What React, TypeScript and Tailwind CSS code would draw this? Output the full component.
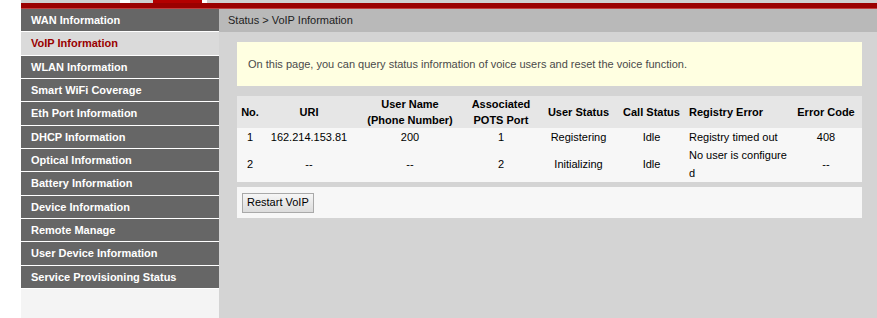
import React from 'react';

const menu = [
  'WAN Information',
  'VoIP Information',
  'WLAN Information',
  'Smart WiFi Coverage',
  'Eth Port Information',
  'DHCP Information',
  'Optical Information',
  'Battery Information',
  'Device Information',
  'Remote Manage',
  'User Device Information',
  'Service Provisioning Status',
];

const rows = [
  { no: '1', uri: '162.214.153.81', user: '200', port: '1', status: 'Registering', call: 'Idle', err: 'Registry timed out', code: '408' },
  { no: '2', uri: '--', user: '--', port: '2', status: 'Initializing', call: 'Idle', err: 'No user is configured', code: '--' },
];

const App: React.FC = () => {
  return (
    <div className="w-[877px] h-[318px] overflow-hidden bg-white flex flex-col text-[11px] font-['Liberation_Sans',Arial,sans-serif]">
      {/* header tabs remnant */}
      <div className="h-[3px] flex shrink-0">
        <div className="w-[21px] bg-white" />
        <div className="w-[99px] bg-[#cfcfcf]" />
        <div className="w-[10px] bg-white" />
        <div className="w-[23px] bg-[#cfcfcf]" />
        <div className="w-[49px] bg-[#b30000]" />
        <div className="w-[5px] bg-white" />
        <div className="flex-1 bg-[#cfcfcf]" />
      </div>
      <div className="h-[6px] flex shrink-0">
        <div className="w-[21px] bg-white" />
        <div className="flex-1 bg-[#9b0000] border-b border-[#c04040]" />
      </div>

      <div className="flex flex-1 min-h-0">
        <div className="w-[21px] bg-white" />
        {/* sidebar */}
        <div className="w-[198px] bg-[#f4f4f4] flex flex-col">
          {menu.map((m) => {
            const active = m === 'VoIP Information';
            return (
              <div
                key={m}
                className={
                  active
                    ? 'h-[23.33px] border-b border-white bg-[#dadada] text-[#990000] font-bold flex items-center pl-[10px]'
                    : 'h-[23.33px] border-b border-white bg-[#666666] text-white font-bold flex items-center pl-[10px]'
                }
              >
                {m}
              </div>
            );
          })}
        </div>

        {/* main */}
        <div className="flex-1 bg-[#d4d4d4] flex flex-col">
          <div className="h-[23px] bg-[#b9b9b9] flex items-center pl-[9px] text-[#222]">
            Status &gt; VoIP Information
          </div>
          <div className="pl-[18px] pr-[15px] pt-[10px] flex flex-col">
            <div className="h-[44px] bg-[#ffffe1] flex items-center pl-[11px] text-[#4a4a4a]">
              On this page, you can query status information of voice users and reset the voice function.
            </div>

            <table className="mt-[10px] w-[625px] table-fixed border-collapse text-black">
              <colgroup>
                <col className="w-[26px]" />
                <col className="w-[92px]" />
                <col className="w-[110px]" />
                <col className="w-[72px]" />
                <col className="w-[83px]" />
                <col className="w-[63px]" />
                <col className="w-[107px]" />
                <col className="w-[72px]" />
              </colgroup>
              <thead>
                <tr className="h-[32px] bg-[#e6e6e6] font-bold leading-[16px]">
                  <th className="text-center">No.</th>
                  <th className="text-center">URI</th>
                  <th className="text-center">User Name<br />(Phone Number)</th>
                  <th className="text-center">Associated<br />POTS Port</th>
                  <th className="text-center">User Status</th>
                  <th className="text-center">Call Status</th>
                  <th className="text-left pl-[6px]">Registry Error</th>
                  <th className="text-center">Error Code</th>
                </tr>
              </thead>
              <tbody>
                {rows.map((r) => (
                  <tr key={r.no} className="bg-[#f7f7f7] leading-[18px]">
                    <td className="text-center">{r.no}</td>
                    <td className="text-center">{r.uri}</td>
                    <td className="text-center">{r.user}</td>
                    <td className="text-center">{r.port}</td>
                    <td className="text-center">{r.status}</td>
                    <td className="text-center">{r.call}</td>
                    <td className="text-left pl-[6px] pr-[1px] break-all">{r.err}</td>
                    <td className="text-center">{r.code}</td>
                  </tr>
                ))}
              </tbody>
            </table>

            <div className="mt-[5px] h-[31px] bg-[#f7f7f7] flex items-center pl-[5px]">
              <button className="h-[20px] px-[4px] border border-[#a9a9a9] bg-gradient-to-b from-[#f6f6f6] to-[#dcdcdc] text-black text-[11px]">
                Restart VoIP
              </button>
            </div>
          </div>
        </div>
      </div>
    </div>
  );
};

export default App;
